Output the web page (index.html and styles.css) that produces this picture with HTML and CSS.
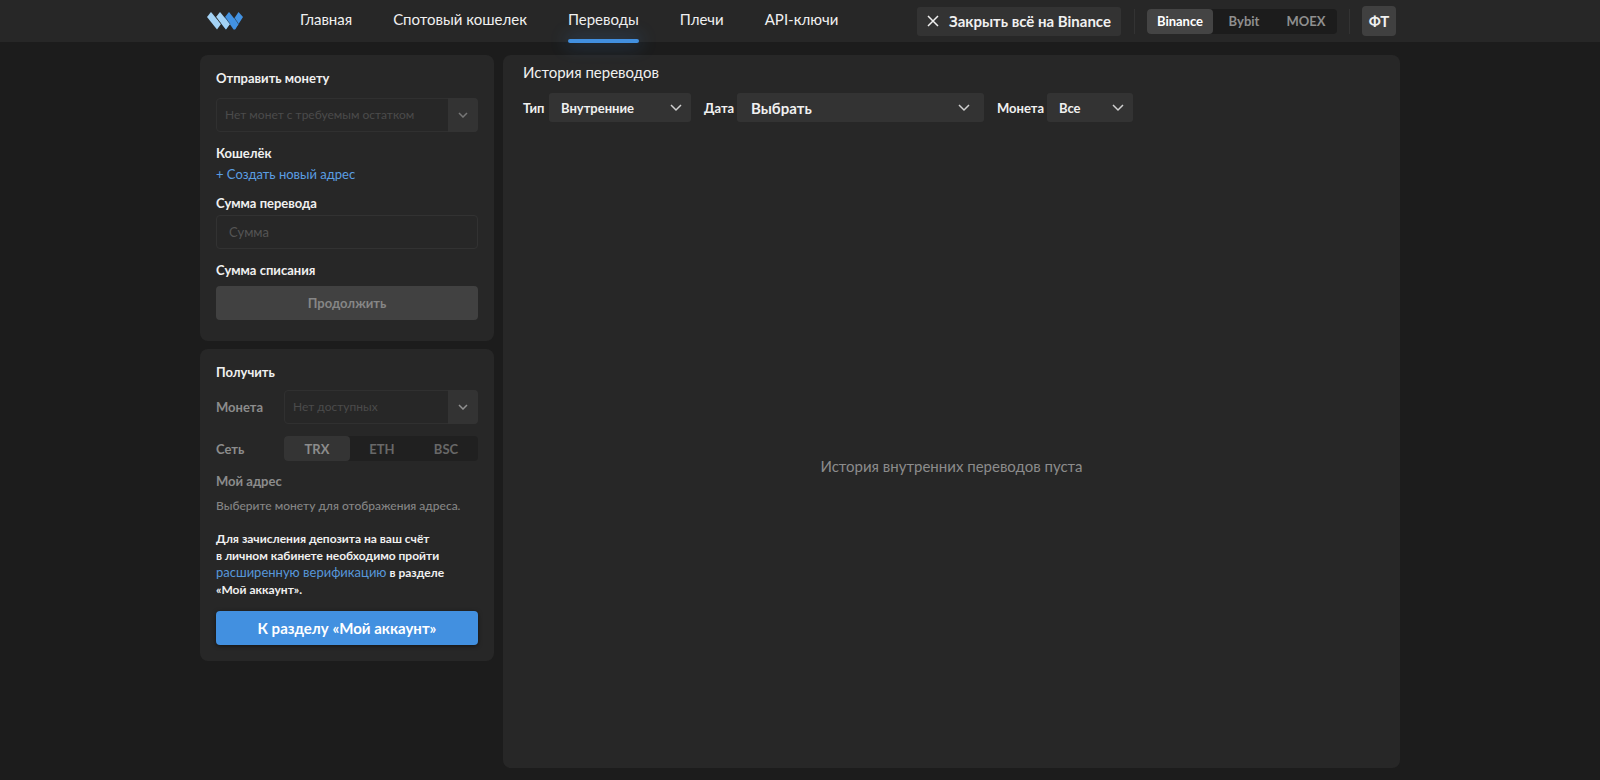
FILE: index.html
```html
<!DOCTYPE html>
<html lang="ru">
<head>
<meta charset="utf-8">
<meta name="viewport" content="width=device-width, initial-scale=1">
<title>Переводы</title>
<link rel="stylesheet" href="styles.css">
</head>
<body>
<header class="header">
  <div class="container header-inner">
    <a class="logo" href="#" aria-label="На главную">
      <svg width="36" height="18" viewBox="0 0 36 18" aria-hidden="true">
        <path fill="#4292e2" d="M27.500 6 31.500 0 36 5 28 17.500 23 11Z"/>
        <path fill="#4292e2" d="M18 5 22 0 31.500 12 28 17.500 26.500 17.500Z"/>
        <path fill="#4292e2" d="M18 5 23 11.500 18.800 17.500 14 11Z"/>
        <path fill="#a3d2f5" d="M9 5 13 0 23 12 19 17.500Z"/>
        <path fill="#a3d2f5" d="M0 5 4 0 14 12 10 17.500Z"/>
        <path fill="none" stroke="#272727" stroke-width="0.500" d="M9 5 14 12M18 5 23 12M27.500 6 31.500 12"/>
      </svg>
    </a>
    <nav class="nav">
      <a class="nav-link" href="#">Главная</a>
      <a class="nav-link" href="#">Спотовый кошелек</a>
      <a class="nav-link nav-link-active" href="#" aria-current="page">Переводы</a>
      <a class="nav-link" href="#">Плечи</a>
      <a class="nav-link" href="#">API-ключи</a>
    </nav>
    <div class="tools">
      <button class="close-all" type="button">
        <svg width="12" height="12" viewBox="0 0 12 12" aria-hidden="true"><path d="M1 1 11 11M11 1 1 11" fill="none" stroke="currentColor" stroke-width="1.500"/></svg>
        Закрыть всё на Binance
      </button>
      <div class="segmented exchanges">
        <button class="segment segment-active" type="button">Binance</button>
        <button class="segment" type="button">Bybit</button>
        <button class="segment" type="button">MOEX</button>
      </div>
      <button class="avatar" type="button">ФТ</button>
    </div>
  </div>
</header>

<main class="container layout">
  <div class="sidebar">
    <form class="card send">
      <h2 class="card-title"><label for="send-coin">Отправить монету</label></h2>
      <div class="picker">
        <select class="picker-field" id="send-coin" disabled><option>Нет монет с требуемым остатком</option></select>
        <span class="picker-arrow"><svg width="10" height="6" viewBox="0 0 10 6" aria-hidden="true"><path d="M1 1 5 5 9 1" fill="none" stroke="currentColor" stroke-width="1.500"/></svg></span>
      </div>
      <h3 class="field-title wallet-title">Кошелёк</h3>
      <a class="link" href="#">+ Создать новый адрес</a>
      <label class="field-title amount-title" for="amount">Сумма перевода</label>
      <input class="text-input" id="amount" type="text" placeholder="Сумма">
      <p class="field-title charge-title">Сумма списания</p>
      <button class="button button-muted" type="submit" disabled>Продолжить</button>
    </form>

    <section class="card receive">
      <h2 class="card-title">Получить</h2>
      <div class="row">
        <label class="row-label" for="receive-coin">Монета</label>
        <div class="picker">
          <select class="picker-field" id="receive-coin" disabled><option>Нет доступных</option></select>
          <span class="picker-arrow picker-arrow-light"><svg width="10" height="6" viewBox="0 0 10 6" aria-hidden="true"><path d="M1 1 5 5 9 1" fill="none" stroke="currentColor" stroke-width="1.500"/></svg></span>
        </div>
      </div>
      <div class="row">
        <span class="row-label">Сеть</span>
        <div class="segmented networks">
          <button class="segment segment-active" type="button">TRX</button>
          <button class="segment" type="button">ETH</button>
          <button class="segment" type="button">BSC</button>
        </div>
      </div>
      <h3 class="row-label address-title">Мой адрес</h3>
      <p class="address-hint">Выберите монету для отображения адреса.</p>
      <p class="notice">Для зачисления депозита на ваш счёт<br>в личном кабинете необходимо пройти<br><a class="notice-link" href="#">расширенную верификацию</a> в разделе<br>«Мой аккаунт».</p>
      <button class="button button-primary" type="button">К разделу «Мой аккаунт»</button>
    </section>
  </div>

  <section class="history">
    <h1 class="history-title">История переводов</h1>
    <div class="filters">
      <label class="filter-label" for="f-type">Тип</label>
      <div class="filter filter-type">
        <select class="filter-field" id="f-type"><option>Внутренние</option></select>
        <svg class="filter-arrow" width="12" height="8" viewBox="0 0 12 8" aria-hidden="true"><path d="M1 1 6 6 11 1" fill="none" stroke="currentColor" stroke-width="1.500"/></svg>
      </div>
      <label class="filter-label" for="f-date">Дата</label>
      <div class="filter filter-date">
        <select class="filter-field filter-field-large" id="f-date"><option>Выбрать</option></select>
        <svg class="filter-arrow" width="12" height="8" viewBox="0 0 12 8" aria-hidden="true"><path d="M1 1 6 6 11 1" fill="none" stroke="currentColor" stroke-width="1.500"/></svg>
      </div>
      <label class="filter-label" for="f-coin">Монета</label>
      <div class="filter filter-coin">
        <select class="filter-field" id="f-coin"><option>Все</option></select>
        <svg class="filter-arrow" width="12" height="8" viewBox="0 0 12 8" aria-hidden="true"><path d="M1 1 6 6 11 1" fill="none" stroke="currentColor" stroke-width="1.500"/></svg>
      </div>
    </div>
    <p class="empty">История внутренних переводов пуста</p>
  </section>
</main>
</body>
</html>
```
FILE: styles.css
```css
* { box-sizing: border-box; }

body {
  margin: 0;
  min-height: 100vh;
  display: flex;
  flex-direction: column;
  background: #1c1c1c;
  color: #f0f0f0;
  font: 13px/16px Lato, Roboto, sans-serif;
}

h1, h2, h3, p { margin: 0; font-size: inherit; font-weight: inherit; }
a { color: inherit; text-decoration: none; }
button, input, select { font: inherit; color: inherit; border: 0; margin: 0; }
select { appearance: none; opacity: 1; }

.container { width: 100%; max-width: 1200px; margin: 0 auto; }

.header { background: #272727; }
.header-inner { display: flex; align-items: center; height: 42px; }
.logo { display: flex; padding-left: 7px; width: 100px; }
.nav { display: flex; align-self: stretch; gap: 41px; }
.nav-link {
  display: flex;
  align-items: center;
  font-size: 15px;
  border-bottom: 4px solid transparent;
}
.nav-link-active { position: relative; }
.nav-link-active::after {
  content: "";
  position: absolute;
  inset: auto 0 -5px;
  height: 4px;
  border-radius: 2px;
  background: #4290e0;
  box-shadow: 0 0 18px 2px rgba(66, 144, 224, .3);
}

.tools { display: flex; align-items: center; margin-left: auto; padding-right: 4px; }
.close-all {
  display: flex;
  align-items: center;
  justify-content: center;
  gap: 10px;
  width: 204px;
  height: 29px;
  padding: 0;
  border-radius: 3px;
  background: #333;
  font-size: 15px;
  font-weight: 700;
  line-height: 18px;
}

.segmented { display: flex; border-radius: 4px; background: #1c1c1c; }
.segment {
  flex: 1;
  height: 25px;
  padding: 0;
  border-radius: 4px;
  background: none;
  color: #8f8f8f;
  font-weight: 700;
}
.segment-active { flex: 0 0 66px; background: #444; color: #fff; }
.exchanges { position: relative; width: 190px; margin: 0 25px 0 26px; }
.exchanges::before, .exchanges::after {
  content: "";
  position: absolute;
  top: 0;
  bottom: 0;
  left: -13px;
  width: 1px;
  background: #333;
}
.exchanges::after { left: auto; right: -13px; }
.avatar {
  width: 34px;
  height: 30px;
  padding: 0;
  border-radius: 4px;
  background: #404040;
  font-size: 15px;
  font-weight: 700;
}

.layout { flex: 1; display: flex; gap: 9px; padding: 13px 0 12px; }
.sidebar { flex: 0 0 294px; display: flex; flex-direction: column; gap: 8px; }
.card, .history { border-radius: 8px; background: #272727; }
.card { display: flex; flex-direction: column; padding: 15px 16px 16px; }
.card-title, .field-title { font-weight: 700; }

.picker { flex: 1; display: grid; grid-template-columns: 1fr 30px; }
.picker-field {
  grid-area: 1 / 1 / 2 / 3;
  height: 34px;
  padding: 0 8px;
  border: 1px solid #303030;
  border-radius: 4px;
  background: #272727;
  color: #4b4b4b;
  font-size: 12px;
}
.picker-arrow {
  grid-area: 1 / 2;
  display: grid;
  place-items: center;
  border-radius: 0 4px 4px 0;
  background: #333;
  color: #777;
}
.picker-arrow-light { color: #909090; }

.send .card-title { margin-bottom: 12px; }
.send { padding-bottom: 21px; }
.send .picker { flex: none; }
.wallet-title { margin-top: 13px; }
.link { margin-top: 5px; color: #5b9ee2; }
.amount-title { margin-top: 13px; }
.text-input {
  height: 34px;
  margin-top: 4px;
  padding: 0 12px;
  border: 1px solid #323232;
  border-radius: 4px;
  background: transparent;
}
.text-input::placeholder { color: #555; opacity: 1; }
.charge-title { margin-top: 13px; }
.button { height: 34px; border-radius: 4px; font-weight: 700; }
.button-muted { margin-top: 8px; background: #414141; color: #868686; }
.button-primary {
  margin-top: 13px;
  background: #4290e0;
  color: #fff;
  font-size: 15px;
  box-shadow: 0 1px 4px rgba(0, 0, 0, .5);
}

.row { display: flex; align-items: center; margin-top: 12px; }
.receive .card-title + .row { margin-top: 10px; }
.row-label { width: 68px; color: #8c8c8c; font-weight: 700; }
.networks { flex: 1; background: #202020; }
.networks .segment { color: #686868; }
.networks .segment-active { background: #343434; color: #8c8c8c; }
.address-title { width: auto; margin-top: 12px; }
.address-hint { margin-top: 9px; color: #858585; font-size: 12px; font-weight: 500; }
.notice { margin-top: 16px; font-size: 12px; line-height: 17px; font-weight: 700; }
.notice-link { color: #5797da; font-size: 13px; font-weight: 400; }

.history { flex: 1; display: flex; flex-direction: column; padding: 7px 20px; }
.history-title { font-size: 15px; line-height: 20px; }
.filters { display: flex; align-items: center; margin-top: 11px; }
.filter-label { width: 26px; font-weight: 700; }
.filter { display: grid; height: 29px; border-radius: 3px; background: #333; }
.filter-field { grid-area: 1 / 1; padding: 0 12px; background: none; font-weight: 700; }
.filter-field-large { padding: 0 14px; font-size: 15px; }
.filter-arrow { grid-area: 1 / 1; place-self: center end; margin-right: 9px; color: #d0d0d0; pointer-events: none; }
.filter-type { width: 142px; }
.filter-date { width: 247px; }
.filter-coin { width: 86px; }
.filter + .filter-label { width: 46px; padding-left: 13px; }
.filter-date .filter-arrow { margin-right: 14px; }
.filter-date + .filter-label { width: 63px; }
.empty { margin: auto; padding-top: 49px; color: #8c8c8c; font-size: 15px; }
```
